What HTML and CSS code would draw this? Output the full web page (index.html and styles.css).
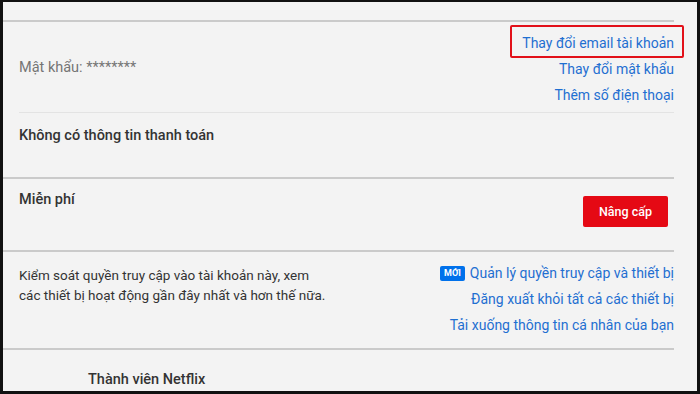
FILE: index.html
```html
<!DOCTYPE html>
<html lang="vi">

<head>
    <meta charset="UTF-8">
    <title>Tài khoản</title>
    <link rel="stylesheet" href="styles.css">
</head>

<body>
    <div class="frame">
        <div class="topbar"></div>

        <div class="section account">
            <div class="rows">
                <div class="label"></div>
                <a class="link marked" href="#">Thay đổi email tài khoản</a>
                <div class="label">Mật khẩu: ********</div>
                <a class="link" href="#">Thay đổi mật khẩu</a>
                <div class="label"></div>
                <a class="link" href="#">Thêm số điện thoại</a>
            </div>
            <div class="divider"></div>
            <div class="payment">Không có thông tin thanh toán</div>
        </div>

        <div class="section plan">
            <div class="title">Miễn phí</div>
            <button class="upgrade">Nâng cấp</button>
        </div>

        <div class="section devices">
            <p class="desc">Kiểm soát quyền truy cập vào tài khoản này, xem<br>các thiết bị hoạt động gần đây nhất và hơn thế nữa.</p>
            <div class="links">
                <a class="link" href="#"><span class="badge">MỚI</span>Quản lý quyền truy cập và thiết bị</a>
                <a class="link" href="#">Đăng xuất khỏi tất cả các thiết bị</a>
                <a class="link" href="#">Tải xuống thông tin cá nhân của bạn</a>
            </div>
        </div>

        <div class="member">Thành viên Netflix</div>
    </div>
</body>

</html>
```

FILE: styles.css
```css
body {
    margin: 0;
    padding: 2px 3px 3px 3px;
    background: #111;
    font-family: Roboto, "Liberation Sans", sans-serif;
}

.frame {
    height: 389px;
    background: #f3f3f3;
    padding-right: 23px;
    overflow: hidden;
}

.topbar {
    height: 18px;
    border-bottom: 2px solid #cacaca;
}

.section {
    border-bottom: 2px solid #cacaca;
}

.link {
    color: #1f6fd1;
    text-decoration: none;
    font-size: 14px;
    line-height: 26px;
    text-align: right;
}

/* account block */

.account {
    padding-top: 8px;
}

.rows {
    display: grid;
    grid-template-columns: 1fr auto;
    grid-auto-rows: 26px;
}

.label {
    padding-left: 16px;
    color: #757575;
    font-size: 14.5px;
    line-height: 24px;
}

.marked {
    position: relative;
}

.marked::after {
    content: "";
    position: absolute;
    left: -12px;
    right: -10px;
    top: -5px;
    bottom: -2px;
    border: 2px solid #e21019;
    border-radius: 2px;
}

.divider {
    margin: 4px 0 0 16px;
    border-top: 1px solid #e3e3e3;
}

.payment {
    padding: 13px 0 31px 16px;
    color: #333;
    font-size: 14.5px;
    font-weight: 500;
    line-height: 20px;
}

/* plan */

.plan {
    display: flex;
    justify-content: space-between;
    align-items: flex-start;
    padding: 11px 6px 23px 16px;
}

.title {
    color: #333;
    font-size: 14.5px;
    font-weight: 500;
    line-height: 20px;
}

.upgrade {
    margin-top: 6px;
    width: 85px;
    height: 31px;
    border: 0;
    border-radius: 2px;
    background: #e50914;
    color: #fff;
    font-family: inherit;
    font-size: 12.5px;
    font-weight: 500;
}

/* devices */

.devices {
    display: flex;
    justify-content: space-between;
    padding: 8px 0 10px 16px;
}

.desc {
    margin: 5px 0 0;
    color: #333;
    font-size: 13.5px;
    line-height: 20px;
}

.links {
    display: flex;
    flex-direction: column;
    align-items: flex-end;
}

.badge {
    display: inline-block;
    margin-right: 5px;
    padding: 0 4px;
    height: 15px;
    line-height: 15px;
    border-radius: 2px;
    background: #0071eb;
    color: #fff;
    font-size: 9px;
    font-weight: 700;
    vertical-align: 2px;
}

.member {
    padding: 20px 0 0 85px;
    color: #333;
    font-size: 14.5px;
    font-weight: 500;
    line-height: 20px;
}
```
